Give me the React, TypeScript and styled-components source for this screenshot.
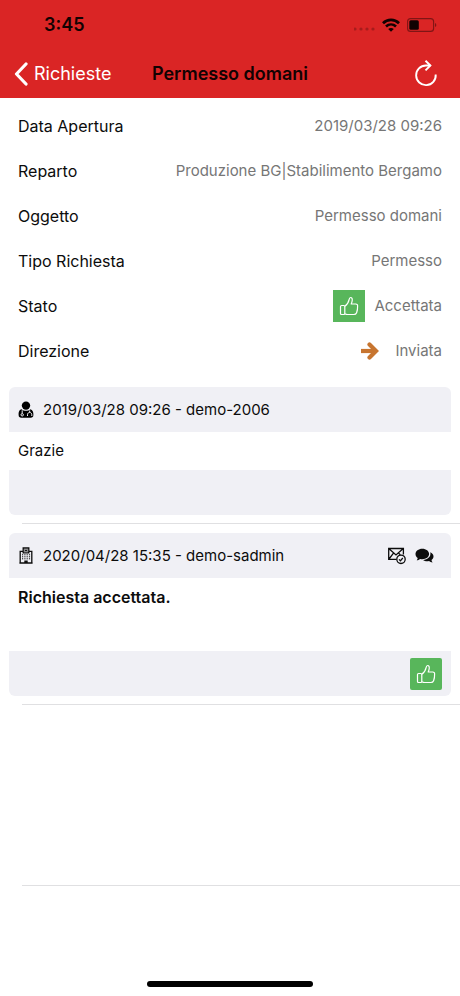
import React from "react";
import styled, { createGlobalStyle } from "styled-components";

const GlobalStyle = createGlobalStyle`
  * { box-sizing: border-box; }
  body {
    margin: 0;
    background: #fff;
    color: #0c0c0c;
    font-family: Inter, "Liberation Sans", sans-serif;
    font-size: 16px;
    line-height: 20px;
  }
  svg { display: block; flex: none; }
`;

const Screen = styled.div`
  min-height: 100vh;
  display: flex;
  flex-direction: column;
`;

const Header = styled.header`
  background: #da2525;
  color: #fff;
`;

const StatusBar = styled.div`
  height: 50px;
  padding: 0 23px 0 44px;
  display: flex;
  align-items: center;
  justify-content: space-between;
  color: #120202;
`;

const Clock = styled.time`
  font-size: 18px;
  font-weight: 600;
`;

const StatusIcons = styled.div`
  display: flex;
  align-items: center;
  gap: 7px;
`;

const NavBar = styled.nav`
  height: 48px;
  padding: 0 14px;
  display: grid;
  grid-template-columns: 1fr auto 1fr;
  align-items: center;
`;

const NavButton = styled.button<{ $end?: boolean }>`
  border: 0;
  padding: ${(p) => (p.$end ? "0 8px" : "0")};
  background: none;
  color: inherit;
  font: inherit;
  font-size: 18px;
  display: flex;
  align-items: center;
  gap: 6px;
  justify-self: ${(p) => (p.$end ? "end" : "start")};
  cursor: pointer;
`;

const Title = styled.h1`
  margin: 0;
  font-size: 18px;
  font-weight: 600;
  color: #120202;
`;

const Details = styled.dl`
  margin: 0;
  padding: 5px 18px 14px;
`;

const DetailRow = styled.div`
  height: 45px;
  display: flex;
  align-items: center;
  justify-content: space-between;
`;

const Term = styled.dt``;

const Value = styled.dd<{ $gap?: number }>`
  margin: 0;
  color: #767676;
  font-size: 15px;
  display: flex;
  align-items: center;
  gap: ${(p) => p.$gap ?? 0}px;
`;

const Badge = styled.span<{ $round?: boolean }>`
  width: 32px;
  height: 32px;
  display: grid;
  place-items: center;
  background: #58b65b;
  border-radius: ${(p) => (p.$round ? 2 : 0)}px;
`;

const Message = styled.article<{ $tall?: boolean }>`
  padding: 0 9px 8px;
  display: grid;
  grid-template-rows: 45px ${(p) => (p.$tall ? 73 : 38)}px 45px;
`;

const Divider = styled.hr`
  border: 0;
  margin: 0 0 9px 22px;
  height: 1px;
  background: #e0e0e2;
`;

const MessageHead = styled.header`
  background: #f0f0f5;
  border-radius: 6px 6px 0 0;
  padding: 1px 17px 0 9px;
  display: flex;
  align-items: center;
  gap: 9px;
`;

const MessageMeta = styled.span`
  flex: 1;
  font-size: 15px;
`;

const MessageText = styled.p<{ $strong?: boolean }>`
  margin: 0;
  padding: 9px;
  font-size: ${(p) => (p.$strong ? 16 : 15)}px;
  font-weight: ${(p) => (p.$strong ? 600 : 400)};
`;

const MessageFoot = styled.footer`
  background: #f0f0f5;
  border-radius: 0 0 6px 6px;
  padding: 0 9px;
  display: flex;
  align-items: center;
  justify-content: flex-end;
`;

const EmptyRow = styled.div`
  height: 171px;
`;

const HomeIndicator = styled.div`
  margin: auto auto 9px;
  width: 36%;
  height: 6px;
  border-radius: 3px;
  background: #000;
`;

const SignalDots = () => (
  <svg width="21" height="18" viewBox="0 0 21 18" fill="#a61c1c">
    {[2, 8, 14, 20].map((x) => (
      <circle key={x} cx={x - 1} cy="13" r="1.6" />
    ))}
  </svg>
);

const WifiIcon = () => (
  <svg width="18" height="14" viewBox="0 0 18 14" fill="none" stroke="currentColor" strokeWidth="2.7">
    <path d="M1 5.2C5.5.8 12.5.8 17 5.2" />
    <path d="M4 8.500c2.900-2.700 7.100-2.700 10 0" />
    <path d="M9 13.800 6.200 11c1.600-1.400 4-1.400 5.600 0Z" fill="currentColor" stroke="none" />
  </svg>
);

const BatteryIcon = () => (
  <svg width="30" height="14" viewBox="0 0 30 14">
    <rect x="0.6" y="0.6" width="26" height="12.8" rx="3" fill="none" stroke="#7f1515" strokeWidth="1.1" />
    <rect x="2.3" y="2.3" width="9.500" height="9.400" rx="1.500" fill="currentColor" />
    <path d="M28 5v4c1.800-.8 1.800-3.200 0-4Z" fill="#7f1515" />
  </svg>
);

const BackIcon = () => (
  <svg width="14" height="24" viewBox="0 0 14 24" fill="none" stroke="currentColor" strokeWidth="3.200" strokeLinecap="round" strokeLinejoin="round">
    <path d="M12 2 2.500 12 12 22" />
  </svg>
);

const ReloadIcon = () => (
  <svg width="24" height="28" viewBox="0 0 24 28" fill="none" stroke="currentColor" strokeWidth="1.900">
    <path d="M21.700 14.500A9.800 9.800 0 1 1 12 5.500h4.500" />
    <path d="m11.500.7 4.900 4.800-4.900 4.900" />
  </svg>
);

const ThumbIcon = () => (
  <svg width="20" height="20" viewBox="0 0 20 20" fill="none" stroke="#fff" strokeWidth="1.200" strokeLinejoin="round">
    <rect x="1.500" y="9.500" width="4.300" height="9" rx="1" />
    <path d="M5.800 10.300c2.500-1.600 3.700-3.600 4.300-6.600.3-1.700.8-2.200 1.500-2.200 1.300 0 1.900 1.300 1.600 3.100-.2 1.300-.5 2.300-1 3.400h4.600c1.300 0 2 .9 1.800 2.100.1 2.500-.3 4.900-1 6.600-.5 1.300-1.400 1.800-2.800 1.800H8.500c-1.200 0-1.900-.4-2.700-.7" />
  </svg>
);

const ArrowIcon = () => (
  <svg width="18" height="18" viewBox="0 0 18 18" fill="none" stroke="#c77530" strokeWidth="4.200">
    <path d="M0 9h14" />
    <path d="m8.500 2.500 6.500 6.500-6.500 6.500" strokeLinecap="round" />
  </svg>
);

const DoctorIcon = () => (
  <svg width="16" height="18" viewBox="0 0 16 18">
    <circle cx="8" cy="4.600" r="4.200" />
    <path d="M3.600 8.200C1 8.700.6 11 .6 13.800c0 2.200 1 3 2.700 3h9.400c1.700 0 2.700-.8 2.700-3 0-2.800-.7-5.100-3-5.600C10.500 10.200 5.500 10.200 3.600 8.200Z" />
    <g fill="none" stroke="#f0f0f5" strokeWidth="1">
      <path d="M4.200 9.300v3.200M11.700 9.500v2M9.500 15v-1.300c0-3 4.300-3 4.300 0V15" />
      <circle cx="4.200" cy="13.800" r="1.200" />
    </g>
  </svg>
);

const BuildingIcon = () => (
  <svg width="16" height="18" viewBox="0 0 16 18" fill="none" stroke="currentColor" strokeWidth="1.300">
    <path d="M5 4.300H2.200v11.700h11.600V4.300H11M1.400 16h13.200" />
    <path d="M5.200 5.800V1h5.600v4.800Z" />
    <path d="M7 2v3M9 2v3M7 3.500h2" strokeWidth=".9" />
    <path d="M4 7.800h8.200M4 9.800h8.200M4 11.800h8.200" strokeWidth="1" strokeDasharray="1.200 1.100" />
    <path d="M6.300 16v-2.500h3.400V16Z" fill="currentColor" stroke="none" />
  </svg>
);

const MailCheckIcon = () => (
  <svg width="19" height="18" viewBox="0 0 19 18" fill="none" stroke="currentColor" strokeWidth="1.300">
    <path d="M9.500 12.300H1.700V1.500h14.700v6M2 1.800l7 6.200 7-6.200M2 12l4.500-5.800M11.500 6l1.800 1.900" />
    <circle cx="14" cy="12.300" r="4.200" />
    <path d="m12 12.400 1.400 1.400 2.400-2.800" />
  </svg>
);

const CommentsIcon = () => (
  <svg width="19" height="16" viewBox="0 0 19 16" fill="currentColor">
    <path d="M7.300.8c3.800 0 6.800 2.300 6.800 5.200s-3 5.200-6.800 5.200c-.8 0-1.500-.1-2.200-.3-1 .8-2 1.300-3.400 1.400.6-.7.9-1.500 1-2.400C1.300 9 .5 7.600.5 6 .5 3.100 3.500.8 7.300.8Z" />
    <path d="M15.200 4.300c2 .8 3.300 2.300 3.300 4.100 0 1.500-.8 2.700-2 3.600.1.900.4 1.700 1.100 2.500-1.500-.1-2.600-.7-3.600-1.500-2.300.5-4.500 0-6-1.100 4.600-.2 8.500-3.300 7.200-7.600Z" />
  </svg>
);

const details = [
  { term: "Data Apertura", value: "2019/03/28 09:26" },
  { term: "Reparto", value: "Produzione BG|Stabilimento Bergamo" },
  { term: "Oggetto", value: "Permesso domani" },
  { term: "Tipo Richiesta", value: "Permesso" },
  { term: "Stato", value: "Accettata", gap: 9, icon: <Badge><ThumbIcon /></Badge> },
  { term: "Direzione", value: "Inviata", gap: 16, icon: <ArrowIcon /> },
];

export default function App() {
  return (
    <Screen>
      <GlobalStyle />
      <Header>
        <StatusBar>
          <Clock>3:45</Clock>
          <StatusIcons>
            <SignalDots />
            <WifiIcon />
            <BatteryIcon />
          </StatusIcons>
        </StatusBar>
        <NavBar>
          <NavButton type="button">
            <BackIcon />
            Richieste
          </NavButton>
          <Title>Permesso domani</Title>
          <NavButton type="button" $end aria-label="Aggiorna">
            <ReloadIcon />
          </NavButton>
        </NavBar>
      </Header>
      <main>
        <Details>
          {details.map((d) => (
            <DetailRow key={d.term}>
              <Term>{d.term}</Term>
              <Value $gap={d.gap}>
                {d.icon}
                {d.value}
              </Value>
            </DetailRow>
          ))}
        </Details>
        <Message>
          <MessageHead>
            <DoctorIcon />
            <MessageMeta>2019/03/28 09:26 - demo-2006</MessageMeta>
          </MessageHead>
          <MessageText>Grazie</MessageText>
          <MessageFoot />
        </Message>
        <Divider />
        <Message $tall>
          <MessageHead>
            <BuildingIcon />
            <MessageMeta>2020/04/28 15:35 - demo-sadmin</MessageMeta>
            <MailCheckIcon />
            <CommentsIcon />
          </MessageHead>
          <MessageText $strong>Richiesta accettata.</MessageText>
          <MessageFoot>
            <Badge $round>
              <ThumbIcon />
            </Badge>
          </MessageFoot>
        </Message>
        <Divider />
        <EmptyRow />
        <Divider />
      </main>
      <HomeIndicator />
    </Screen>
  );
}
